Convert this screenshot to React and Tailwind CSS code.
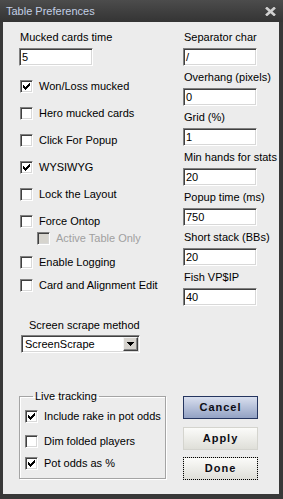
import React from "react";

const sunken =
  "border border-t-[#808080] border-l-[#808080] border-b-white border-r-white shadow-[inset_1px_1px_0_#404040,inset_-1px_-1px_0_#d8d8d8]";

const CheckBox = ({ checked, disabled }) => (
  <span
    className={`flex h-[13px] w-[13px] shrink-0 items-center justify-center ${sunken} ${
      disabled ? "bg-[#d6d4ce]" : "bg-white"
    }`}
  >
    {checked && (
      <svg width="7" height="7" viewBox="0 0 7 7" shapeRendering="crispEdges">
        <path
          d="M6 0h1v1h-1z M5 1h2v1h-2z M0 2h1v1h-1z M4 2h3v1h-3z M0 3h2v1h-2z M3 3h3v1h-3z M0 4h5v1h-5z M1 5h3v1h-3z M2 6h1v1h-1z"
          fill="#000"
        />
      </svg>
    )}
  </span>
);

const CheckRow = ({ label, checked, disabled, className = "" }) => (
  <div className={`flex h-[13px] items-center gap-[6px] whitespace-nowrap ${className}`}>
    <CheckBox checked={checked} disabled={disabled} />
    <span className={`leading-[13px] ${disabled ? "text-[#a0a0a0]" : "text-black"}`}>{label}</span>
  </div>
);

const TextBox = ({ value, className = "" }) => (
  <div className={`h-[18px] w-[74px] bg-white pl-[2px] leading-[16px] ${sunken} ${className}`}>{value}</div>
);

const Field = ({ label, value, className = "" }) => (
  <div className={className}>
    <div className="h-[13px] leading-[13px] pl-[1px] whitespace-nowrap">{label}</div>
    <TextBox value={value} className="mt-[4px]" />
  </div>
);

const Button = ({ children, variant, className = "" }) => {
  const styles = {
    cancel: "border-[#25355f] bg-linear-to-b from-[#d9dfee] to-[#93a2c4]",
    normal: "border-[#d4d4ce] bg-linear-to-b from-[#fbfbf9] to-[#dfdfd9]",
    focus:
      "border-[#d4d4ce] bg-linear-to-b from-[#fbfbf9] to-[#dfdfd9] outline-1 outline-dotted outline-black outline-offset-[-1px]",
  };
  return (
    <div
      className={`flex h-[23px] w-[75px] items-center justify-center border font-bold tracking-[1px] text-[#0c0c14] ${styles[variant]} ${className}`}
    >
      {children}
    </div>
  );
};

export default function App() {
  return (
    <div className="flex h-[499px] w-[283px] flex-col bg-[#383838] font-['Liberation_Sans',Arial,sans-serif] text-[11px] text-black">
      <div className="flex h-[22px] shrink-0 items-center justify-between bg-linear-to-b from-[#4c4c4c] to-[#343434] pl-[6px] pr-[7px]">
        <span className="leading-none text-[#c3cfe4]">Table Preferences</span>
        <svg width="11" height="9" viewBox="0 0 11 9">
          <path d="M1 0.5 L10 8.5 M10 0.5 L1 8.5" stroke="#d0d0d0" strokeWidth="2.6" />
        </svg>
      </div>

      <div className="mb-[5px] ml-[3px] mr-[4px] flex-1 bg-[#ececec] pl-[16px] pt-[9px]">
        <div className="flex">
          <div className="flex w-[164px] flex-col">
            <Field label="Mucked cards time" value="5" />
            <CheckRow label="Won/Loss mucked" checked className="mt-[14px] ml-[1px]" />
            <CheckRow label="Hero mucked cards" className="mt-[14px] ml-[1px]" />
            <CheckRow label="Click For Popup" className="mt-[14px] ml-[1px]" />
            <CheckRow label="WYSIWYG" checked className="mt-[14px] ml-[1px]" />
            <CheckRow label="Lock the Layout" className="mt-[14px] ml-[1px]" />
            <CheckRow label="Force Ontop" className="mt-[14px] ml-[1px]" />
            <CheckRow label="Active Table Only" disabled className="mt-[4px] ml-[18px]" />
            <CheckRow label="Enable Logging" className="mt-[11px] ml-[1px]" />
            <CheckRow label="Card and Alignment Edit" className="mt-[10px] ml-[1px]" />
            <div className="mt-[27px] ml-[10px] h-[13px] leading-[13px]">Screen scrape method</div>
            <div className={`mt-[3px] ml-[2px] flex h-[18px] w-[119px] items-center justify-between bg-white pl-[3px] pr-[1px] ${sunken}`}>
              <span className="leading-[14px]">ScreenScrape</span>
              <div className="flex h-[14px] w-[15px] items-center justify-center border border-t-[#f4f4f4] border-l-[#f4f4f4] border-b-[#404040] border-r-[#404040] bg-[#d6d3ce] shadow-[inset_-1px_-1px_0_#888]">
                <svg width="7" height="4" viewBox="0 0 7 4" shapeRendering="crispEdges">
                  <path d="M0 0h7v1h-7z M1 1h5v1h-5z M2 2h3v1h-3z M3 3h1v1h-1z" fill="#000" />
                </svg>
              </div>
            </div>
          </div>

          <div className="flex flex-col">
            <Field label="Separator char" value="/" />
            <Field label="Overhang (pixels)" value="0" className="mt-[5px]" />
            <Field label="Grid (%)" value="1" className="mt-[5px]" />
            <Field label="Min hands for stats" value="20" className="mt-[5px]" />
            <Field label="Popup time (ms)" value="750" className="mt-[5px]" />
            <Field label="Short stack (BBs)" value="20" className="mt-[5px]" />
            <Field label="Fish VP$IP" value="40" className="mt-[5px]" />
          </div>
        </div>

        <div className="mt-[37px] flex items-start">
          <fieldset className="w-[147px] border border-[#a4a4a4] pb-[8px] pl-[5px] shadow-[1px_1px_0_#fff,inset_1px_1px_0_#fff]">
            <legend className="ml-[8px] px-[2px] leading-[13px]">Live tracking</legend>
            <CheckRow label="Include rake in pot odds" checked className="mt-[7px]" />
            <CheckRow label="Dim folded players" className="mt-[12px]" />
            <CheckRow label="Pot odds as %" checked className="mt-[9px]" />
          </fieldset>

          <div className="ml-[17px] mt-[6px] flex flex-col">
            <Button variant="cancel">Cancel</Button>
            <Button variant="normal" className="mt-[8px]">Apply</Button>
            <Button variant="focus" className="mt-[7px]">Done</Button>
          </div>
        </div>
      </div>
    </div>
  );
}
